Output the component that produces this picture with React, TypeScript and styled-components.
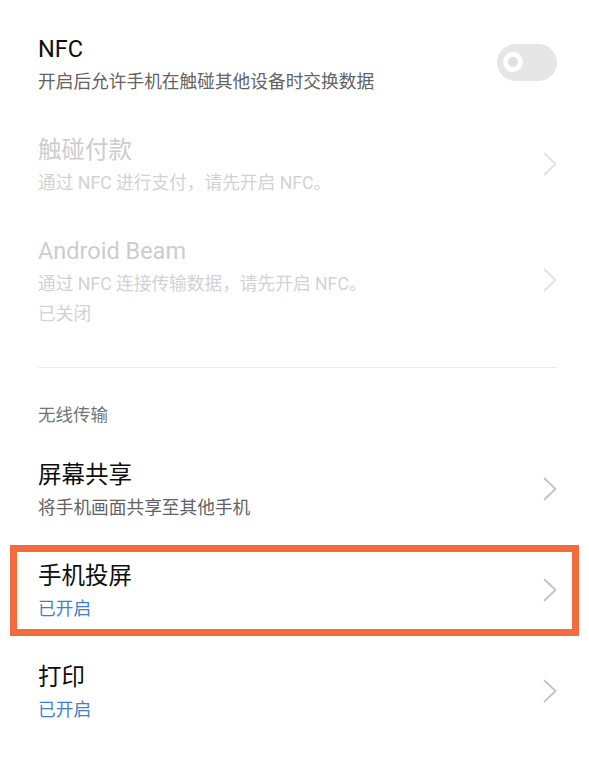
import React from "react";
import styled, { createGlobalStyle } from "styled-components";

const Global = createGlobalStyle`
  html, body { margin: 0; padding: 0; background: #ffffff; }
  body {
    font-family: Roboto, "Noto Sans CJK SC", "Noto Sans", sans-serif;
    -webkit-font-smoothing: antialiased;
  }
`;

const Page = styled.div`
  width: 589px;
  min-height: 758px;
  box-sizing: border-box;
  padding-top: 14px;
  background: #ffffff;
  display: flex;
  flex-direction: column;
`;

const Row = styled.div<{ $highlight?: boolean }>`
  position: relative;
  display: flex;
  align-items: center;
  padding: 17px 32px 18px 38px;
  gap: 20px;
  ${(p) =>
    p.$highlight &&
    `
    &::after {
      content: "";
      position: absolute;
      left: 10px;
      right: 10px;
      top: 4px;
      bottom: 6px;
      border: 7px solid #f36c3e;
      pointer-events: none;
    }
  `}
`;

const Texts = styled.div`
  flex: 1;
  display: flex;
  flex-direction: column;
  min-width: 0;
`;

const Title = styled.div<{ $disabled?: boolean }>`
  font-size: 23.5px;
  line-height: 36px;
  color: ${(p) => (p.$disabled ? "#cdcdcd" : "#0d0d0d")};
  white-space: nowrap;
`;

const Sub = styled.div<{ $tone?: "gray" | "disabled" | "blue" }>`
  font-size: 17.7px;
  line-height: 30px;
  white-space: nowrap;
  color: ${(p) =>
    p.$tone === "disabled" ? "#d2d2d2" : p.$tone === "blue" ? "#3f7fd2" : "#636363"};
`;

const Toggle = styled.div`
  position: relative;
  width: 60px;
  height: 37px;
  border-radius: 18.5px;
  background: #e6e6e6;
  flex-shrink: 0;
  margin-bottom: 3px;
`;

const Knob = styled.div`
  position: absolute;
  left: 6px;
  top: 8px;
  width: 10px;
  height: 10px;
  border-radius: 50%;
  border: 5.5px solid #ffffff;
  background: #e0e0e0;
`;

const Divider = styled.div`
  height: 1px;
  background: #ececec;
  margin: 20px 32px 0 38px;
`;

const SectionHeader = styled.div`
  font-size: 17.5px;
  line-height: 30px;
  color: #757575;
  padding: 32px 38px 10px;
`;

const ChevronBox = styled.svg`
  flex-shrink: 0;
  width: 14px;
  height: 24px;
  margin-bottom: 3px;
`;

const Chevron: React.FC<{ light?: boolean }> = ({ light }) => (
  <ChevronBox viewBox="0 0 14 24">
    <polyline
      points="1.5,1.5 12.5,12 1.5,22.5"
      fill="none"
      stroke={light ? "#e2e2e2" : "#c4c4c4"}
      strokeWidth="1.8"
      strokeLinecap="round"
      strokeLinejoin="round"
    />
  </ChevronBox>
);

export default function App() {
  return (
    <>
      <Global />
      <Page>
        <Row>
          <Texts>
            <Title>NFC</Title>
            <Sub>开启后允许手机在触碰其他设备时交换数据</Sub>
          </Texts>
          <Toggle>
            <Knob />
          </Toggle>
        </Row>
        <Row>
          <Texts>
            <Title $disabled>触碰付款</Title>
            <Sub $tone="disabled">通过 NFC 进行支付，请先开启 NFC。</Sub>
          </Texts>
          <Chevron light />
        </Row>
        <Row>
          <Texts>
            <Title $disabled>Android Beam</Title>
            <Sub $tone="disabled">通过 NFC 连接传输数据，请先开启 NFC。</Sub>
            <Sub $tone="disabled">已关闭</Sub>
          </Texts>
          <Chevron light />
        </Row>
        <Divider />
        <SectionHeader>无线传输</SectionHeader>
        <Row>
          <Texts>
            <Title>屏幕共享</Title>
            <Sub>将手机画面共享至其他手机</Sub>
          </Texts>
          <Chevron />
        </Row>
        <Row $highlight>
          <Texts>
            <Title>手机投屏</Title>
            <Sub $tone="blue">已开启</Sub>
          </Texts>
          <Chevron />
        </Row>
        <Row>
          <Texts>
            <Title>打印</Title>
            <Sub $tone="blue">已开启</Sub>
          </Texts>
          <Chevron />
        </Row>
      </Page>
    </>
  );
}
